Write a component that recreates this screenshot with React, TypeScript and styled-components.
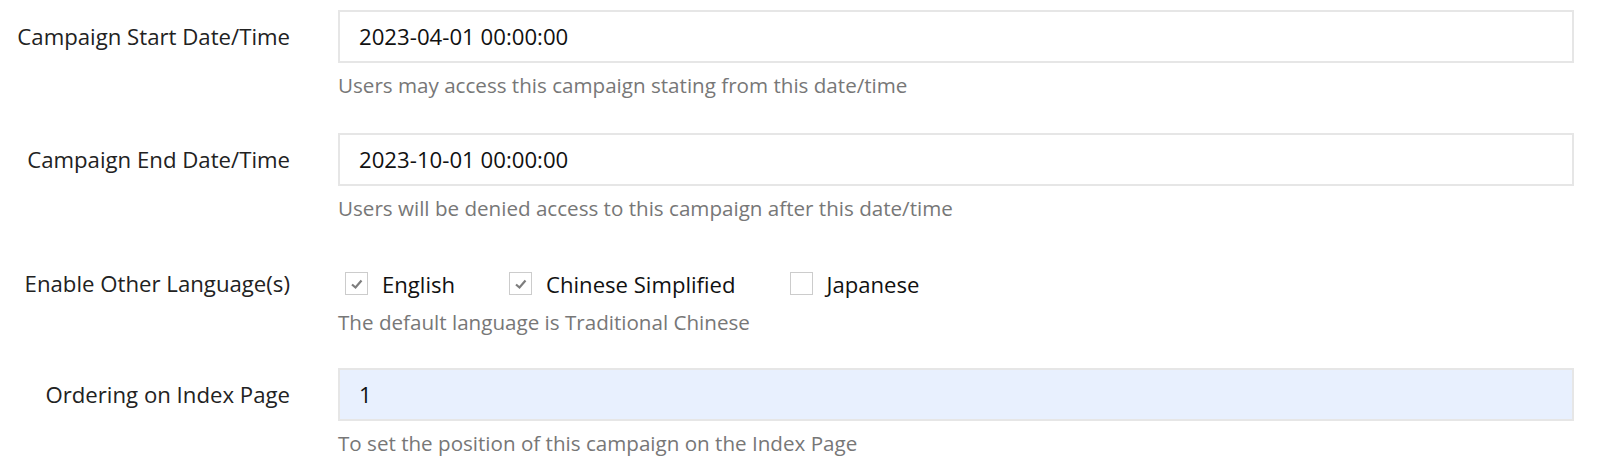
import React from "react";
import styled, { createGlobalStyle } from "styled-components";

const Global = createGlobalStyle`
  html, body { margin: 0; padding: 0; background: #fff; }
  body { font-family: "Open Sans", "Noto Sans", sans-serif; color: #222; }
`;

const Form = styled.form`
  display: flex;
  flex-direction: column;
  padding: 10px 26px 0 0;
`;

const Row = styled.div<{ $mb?: number }>`
  display: grid;
  grid-template-columns: 290px 1fr;
  column-gap: 48px;
  margin-bottom: ${(p) => p.$mb ?? 34}px;
`;

const Label = styled.label<{ $h: number; $top?: number }>`
  box-sizing: border-box;
  display: flex;
  align-items: center;
  justify-content: flex-end;
  height: ${(p) => p.$h + (p.$top ?? 0)}px;
  padding-top: ${(p) => p.$top ?? 0}px;
  font-size: 22.2px;
  color: #222;
  white-space: nowrap;
`;

const Field = styled.div`
  display: flex;
  flex-direction: column;
`;

const Input = styled.input<{ $filled?: boolean }>`
  box-sizing: border-box;
  height: 53px;
  width: 100%;
  border: 2px solid #e6e6e6;
  background: ${(p) => (p.$filled ? "#e8f0fe" : "#fff")};
  padding: 0 19px;
  font-family: "Open Sans", sans-serif;
  font-size: 22.2px;
  color: #111;
  outline: none;
`;

const Help = styled.div`
  margin-top: 8px;
  font-size: 20.6px;
  line-height: 28px;
  color: #777;
`;

const Checks = styled.div`
  display: flex;
  align-items: center;
  height: 33px;
  margin-top: 11px;
  gap: 54px;
  padding-left: 7px;
`;

const Check = styled.label`
  display: flex;
  align-items: center;
  gap: 14px;
  font-size: 22.1px;
  color: #111;
`;

const Box = styled.span`
  box-sizing: border-box;
  width: 23px;
  height: 23px;
  border: 1.5px solid #cccccc;
  display: flex;
  align-items: center;
  justify-content: center;
`;

const Tick = () => (
  <svg width="16" height="16" viewBox="0 0 16 16">
    <path d="M3 8.5 L6.5 11.5 L12.5 4.5" fill="none" stroke="#7d7d7d" strokeWidth="2.2" />
  </svg>
);

export default function App() {
  return (
    <>
      <Global />
      <Form>
        <Row>
          <Label $h={53}>Campaign Start Date/Time</Label>
          <Field>
            <Input defaultValue="2023-04-01 00:00:00" />
            <Help>Users may access this campaign stating from this date/time</Help>
          </Field>
        </Row>
        <Row>
          <Label $h={53}>Campaign End Date/Time</Label>
          <Field>
            <Input defaultValue="2023-10-01 00:00:00" />
            <Help>Users will be denied access to this campaign after this date/time</Help>
          </Field>
        </Row>
        <Row $mb={32}>
          <Label $h={33} $top={11}>Enable Other Language(s)</Label>
          <Field>
            <Checks>
              <Check><Box><Tick /></Box>English</Check>
              <Check><Box><Tick /></Box>Chinese Simplified</Check>
              <Check><Box />Japanese</Check>
            </Checks>
            <Help>The default language is Traditional Chinese</Help>
          </Field>
        </Row>
        <Row $mb={0}>
          <Label $h={53}>Ordering on Index Page</Label>
          <Field>
            <Input $filled defaultValue="1" />
            <Help>To set the position of this campaign on the Index Page</Help>
          </Field>
        </Row>
      </Form>
    </>
  );
}
